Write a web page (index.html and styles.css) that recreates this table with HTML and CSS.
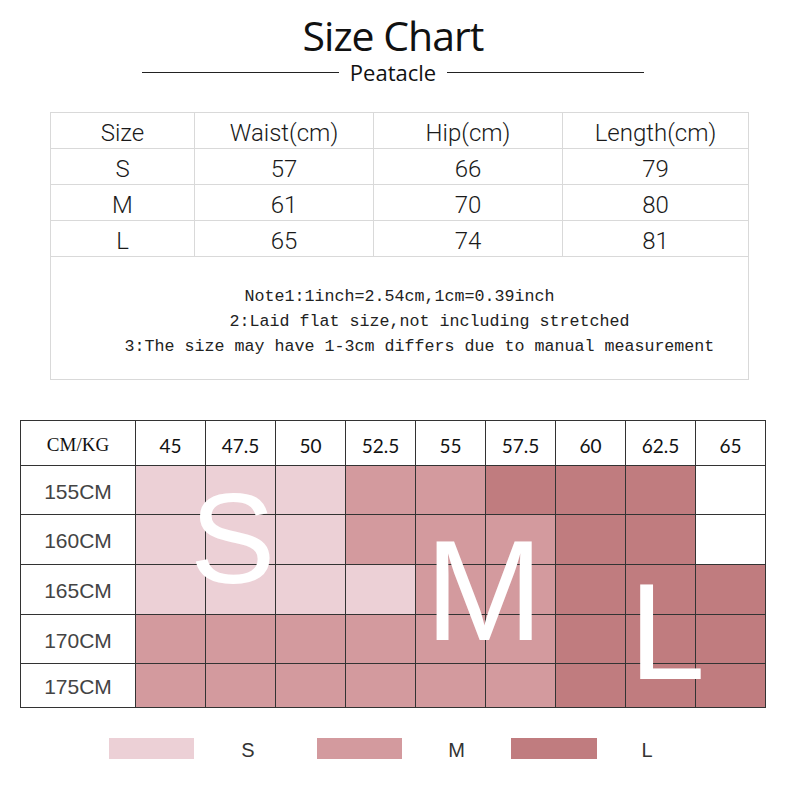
FILE: index.html
```html
<!DOCTYPE html>
<html lang="en">
<head>
<meta charset="utf-8">
<title>Size Chart</title>
<link rel="stylesheet" href="styles.css">
</head>
<body>
<header class="head">
  <h1 class="title">Size Chart</h1>
  <div class="sub">
    <span class="rule"></span>
    <span class="brand">Peatacle</span>
    <span class="rule"></span>
  </div>
</header>

<section class="sizes">
  <div class="c">Size</div><div class="c">Waist(cm)</div><div class="c">Hip(cm)</div><div class="c">Length(cm)</div>
  <div class="c">S</div><div class="c">57</div><div class="c">66</div><div class="c">79</div>
  <div class="c">M</div><div class="c">61</div><div class="c">70</div><div class="c">80</div>
  <div class="c">L</div><div class="c">65</div><div class="c">74</div><div class="c">81</div>
  <div class="note">
    <div class="nl">Note1:1inch=2.54cm,1cm=0.39inch</div>
    <div class="nl">      2:Laid flat size,not including stretched</div>
    <div class="nl">    3:The size may have 1-3cm differs due to manual measurement</div>
  </div>
</section>

<section class="chart">
  <div class="hd corner">CM/KG</div>
  <div class="hd">45</div><div class="hd">47.5</div><div class="hd">50</div><div class="hd">52.5</div><div class="hd">55</div><div class="hd">57.5</div><div class="hd">60</div><div class="hd">62.5</div><div class="hd">65</div>

  <div class="rl">155CM</div>
  <div class="s"></div><div class="s"></div><div class="s"></div><div class="m"></div><div class="m"></div><div class="l"></div><div class="l"></div><div class="l"></div><div class="w"></div>

  <div class="rl">160CM</div>
  <div class="s"></div><div class="s"></div><div class="s"></div><div class="m"></div><div class="m"></div><div class="m"></div><div class="l"></div><div class="l"></div><div class="w"></div>

  <div class="rl">165CM</div>
  <div class="s"></div><div class="s"></div><div class="s"></div><div class="s"></div><div class="m"></div><div class="m"></div><div class="l"></div><div class="l"></div><div class="l"></div>

  <div class="rl">170CM</div>
  <div class="m"></div><div class="m"></div><div class="m"></div><div class="m"></div><div class="m"></div><div class="m"></div><div class="l"></div><div class="l"></div><div class="l"></div>

  <div class="rl">175CM</div>
  <div class="m"></div><div class="m"></div><div class="m"></div><div class="m"></div><div class="m"></div><div class="m"></div><div class="l"></div><div class="l"></div><div class="l"></div>

  <span class="big big-s">S</span>
  <span class="big big-m">M</span>
  <span class="big big-l">L</span>
</section>

<section class="legend">
  <span class="sw s"></span><span class="lbl lbl-s">S</span>
  <span class="sw m"></span><span class="lbl">M</span>
  <span class="sw l"></span><span class="lbl">L</span>
</section>
</body>
</html>
```

FILE: styles.css
```css
* { box-sizing: border-box; margin: 0; padding: 0; }

body {
  margin: 0;
  background: #fff;
  width: 800px;
}

.head {
  width: 786px;
  padding-top: 15px;
}

.title {
  text-align: center;
  font-family: "Open Sans", "Liberation Sans", sans-serif;
  font-weight: 400;
  font-size: 41px;
  line-height: 41px;
  letter-spacing: -1px;
  color: #111;
}

.sub {
  margin-top: 5px;
  display: flex;
  justify-content: center;
  align-items: center;
  gap: 11px;
}

.rule {
  width: 197px;
  height: 1px;
  background: #222;
}

.brand {
  font-family: "Open Sans", "Liberation Sans", sans-serif;
  font-size: 22px;
  line-height: 22px;
  color: #111;
}

/* measurement table */
.sizes {
  margin: 29px 0 0 50px;
  width: 699px;
  display: grid;
  grid-template-columns: 143px 178px 188px 185px;
  gap: 1px;
  padding: 1px;
  background: #d9d9d9;
}

.c {
  background: #fff;
  height: 35px;
  padding-top: 6px;
  line-height: 29px;
  text-align: center;
  font-family: Roboto, "Liberation Sans", sans-serif;
  font-weight: 300;
  font-size: 24px;
  color: #1a1a1a;
}

.note {
  grid-column: 1 / -1;
  background: #fff;
  height: 122px;
  padding-top: 27px;
  font-family: "Liberation Mono", monospace;
  font-size: 16.67px;
  line-height: 25px;
  color: #222;
  text-align: center;
}

.nl {
  white-space: pre;
}

/* height / weight chart */
.chart {
  position: relative;
  margin: 40px 0 0 20px;
  width: 746px;
  display: grid;
  grid-template-columns: 114px repeat(9, 69px);
  grid-template-rows: 44px 48px 49px 49px 48px 43px;
  gap: 1px;
  padding: 1px;
  background: #333;
}

.hd {
  background: #fff;
  display: flex;
  align-items: center;
  justify-content: center;
  padding-top: 4px;
  font-family: Lato, "Liberation Sans", sans-serif;
  font-size: 19px;
  color: #111;
}

.corner {
  font-family: "Liberation Serif", serif;
  font-size: 19px;
}

.rl {
  background: #fff;
  display: flex;
  align-items: center;
  justify-content: center;
  padding-top: 3px;
  font-family: "Liberation Sans", sans-serif;
  font-size: 21px;
  color: #444;
}

.s { background: #ecd0d6; }
.m { background: #d39a9e; }
.l { background: #c07c7f; }
.w { background: #fff; }

.big {
  position: absolute;
  color: #fff;
  font-family: "Liberation Sans", sans-serif;
  line-height: 1;
}

.big-s { left: 170px; top: 55px; font-size: 128px; }
.big-m { left: 405px; top: 100px; font-size: 142px; }
.big-l { left: 609px; top: 143px; font-size: 137px; }

/* legend */
.legend {
  margin: 29px 0 0 109px;
  display: grid;
  grid-template-columns: 85px 123px 85px 109px 86px 100px;
  align-items: center;
  height: 22px;
}

.sw {
  height: 22px;
}

.lbl {
  text-align: center;
  font-family: "Liberation Sans", sans-serif;
  font-size: 20px;
  line-height: 22px;
  padding-top: 2px;
  color: #333;
}

.lbl-s {
  padding-right: 15px;
}
```
